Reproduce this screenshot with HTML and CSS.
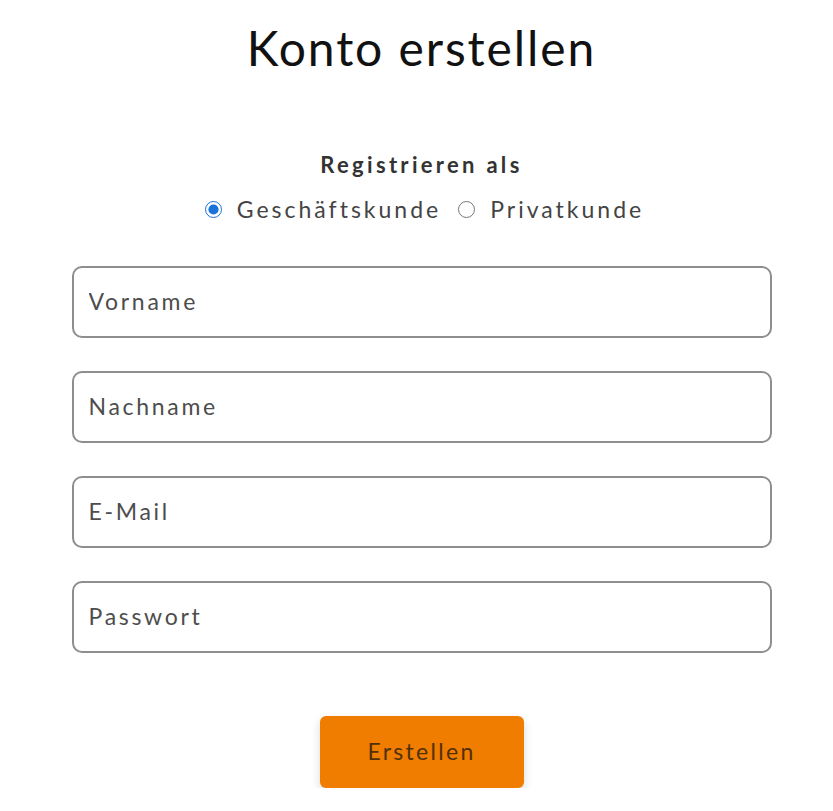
FILE: index.html
```html
<!DOCTYPE html>
<html lang="de">
<head>
    <meta charset="UTF-8">
    <meta name="viewport" content="width=device-width, initial-scale=1.0">
    <title>Konto erstellen</title>
    <link rel="stylesheet" href="styles.css">
</head>
<body>
    <div class="signup">
        <h1 class="signup-title">Konto erstellen</h1>

        <div class="account-type">
            <div class="account-type-label">Registrieren als</div>
            <div class="account-type-options">
                <label class="radio-option">
                    <input type="radio" name="type" checked>
                    <span>Geschäftskunde</span>
                </label>
                <label class="radio-option">
                    <input type="radio" name="type">
                    <span>Privatkunde</span>
                </label>
            </div>
        </div>

        <form class="signup-form">
            <input class="field" type="text" placeholder="Vorname">
            <input class="field" type="text" placeholder="Nachname">
            <input class="field" type="email" placeholder="E-Mail">
            <input class="field" type="password" placeholder="Passwort">
            <button class="submit-btn" type="button">Erstellen</button>
        </form>
    </div>
</body>
</html>
```

FILE: styles.css
```css
* {
    margin: 0;
    padding: 0;
    box-sizing: border-box;
}

body {
    font-family: 'Lato', 'Noto Sans', sans-serif;
    background: #ffffff;
    color: #333333;
}

.signup {
    width: 833px;
    display: flex;
    flex-direction: column;
    align-items: center;
    padding-top: 20px;
    padding-left: 10px;
}

.signup-title {
    font-size: 48px;
    font-weight: 400;
    color: #111111;
    letter-spacing: 1.9px;
    line-height: 56px;
}

.account-type {
    margin-top: 76px;
    display: flex;
    flex-direction: column;
    align-items: center;
}

.account-type-label {
    font-size: 22px;
    font-weight: 700;
    color: #333333;
    letter-spacing: 3.3px;
    line-height: 26px;
}

.account-type-options {
    display: flex;
    gap: 17px;
    margin-top: 17px;
    padding-left: 6px;
}

.radio-option {
    display: flex;
    align-items: center;
    gap: 15px;
    font-size: 23px;
    letter-spacing: 3px;
    color: #444444;
    line-height: 28px;
}

.radio-option input {
    width: 17px;
    height: 17px;
    accent-color: #1a73d9;
    margin: 0;
}

.signup-form {
    margin-top: 43px;
    display: flex;
    flex-direction: column;
    align-items: center;
    gap: 33px;
}

.field {
    width: 700px;
    height: 72px;
    border: 2px solid #8e8e8e;
    border-radius: 10px;
    padding: 0 15px 2px;
    font-family: inherit;
    font-size: 23px;
    letter-spacing: 2.7px;
    color: #333333;
    background: #ffffff;
    outline: none;
}

.field::placeholder {
    color: #4d4d4d;
}

.submit-btn {
    margin-top: 30px;
    width: 204px;
    height: 72px;
    border: none;
    border-radius: 6px;
    padding-bottom: 2px;
    background: #f07d00;
    color: #52300a;
    font-family: inherit;
    font-size: 23px;
    letter-spacing: 2.3px;
    box-shadow: 0 4px 10px rgba(0, 0, 0, 0.15);
    cursor: pointer;
}
```
